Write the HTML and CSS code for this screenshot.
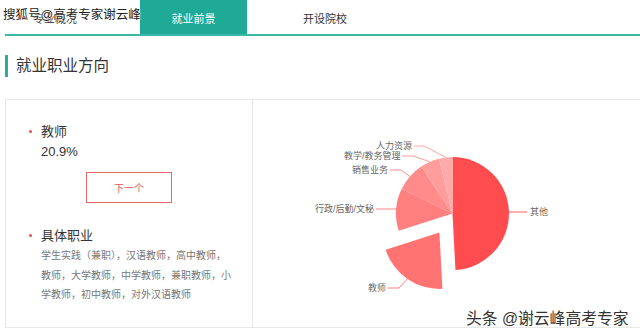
FILE: index.html
```html
<!DOCTYPE html>
<html lang="zh-CN">
<head>
    <meta charset="UTF-8">
    <meta name="viewport" content="width=device-width, initial-scale=1.0">
    <title>就业前景</title>
    <link rel="stylesheet" href="styles.css">
</head>
<body>

<div class="page">
    <div class="tabs">
        <div class="tab tab-first">专业概况</div>
        <div class="tab tab-active">就业前景</div>
        <div class="tab tab-last">开设院校</div>
    </div>

    <h2 class="section-title">就业职业方向</h2>

    <div class="card">
        <div class="card-info">
            <div class="info-item">
                <span class="dot"></span>
                <div>
                    <p class="info-name">教师</p>
                    <p class="info-name">20.9%</p>
                </div>
            </div>
            <button class="next-btn">下一个</button>
            <div class="info-item info-jobs">
                <span class="dot"></span>
                <div>
                    <p class="info-name">具体职业</p>
                    <p class="info-desc">学生实践（兼职），汉语教师，高中教师，教师，大学教师，中学教师，兼职教师，小学教师，初中教师，对外汉语教师</p>
                </div>
            </div>
        </div>

        <div class="card-chart">
            <svg class="pie" width="386" height="227" viewBox="254 100 386 227">
                <!-- slices, clockwise from 12 o'clock -->
                <path fill="#ff4d4f" d="M453.5 213.5 L453.5 157 A56.5 56.5 0 0 1 456.46 269.92 Z"/>
                <path fill="#ff7373" d="M440.44 232.43 L443.4 288.85 A56.5 56.5 0 0 1 386.65 249.7 Z"/>
                <path fill="#ff7f7f" d="M453.5 213.5 L399.71 230.77 A56.5 56.5 0 0 1 402.59 189 Z"/>
                <path fill="#ff8b8b" d="M453.5 213.5 L402.59 189 A56.5 56.5 0 0 1 422.23 166.44 Z"/>
                <path fill="#ff9c9c" d="M453.5 213.5 L422.23 166.44 A56.5 56.5 0 0 1 440.02 158.63 Z"/>
                <path fill="#ffabab" d="M453.5 213.5 L440.02 158.63 A56.5 56.5 0 0 1 453.5 157 Z"/>

                <g class="pie-lines" fill="none" stroke-width="1">
                    <polyline stroke="#ff5a5c" points="510,212 528,212"/>
                    <polyline stroke="#ff7f7f" points="408.3,278.9 400,288 389,288"/>
                    <polyline stroke="#ff8585" points="397,209 377,209"/>
                    <polyline stroke="#ff8f8f" points="410.9,176.4 402,170 391,170"/>
                    <polyline stroke="#ff9a9a" points="430.8,161.7 414,156 403,156"/>
                    <polyline stroke="#ffa5a5" points="446.7,157.4 425,146 415,146"/>
                </g>

                <g class="pie-labels">
                    <text x="531" y="212" text-anchor="start">其他</text>
                    <text x="387" y="288" text-anchor="end">教师</text>
                    <text x="375" y="209" text-anchor="end">行政/后勤/文秘</text>
                    <text x="389" y="170" text-anchor="end">销售业务</text>
                    <text x="401.5" y="156" text-anchor="end">教学/教务管理</text>
                    <text x="413" y="146" text-anchor="end">人力资源</text>
                </g>
            </svg>
        </div>
    </div>

    <div class="mark mark-top">搜狐号@高考专家谢云峰</div>
    <div class="mark mark-bottom">头条 @谢云峰高考专家</div>
</div>

</body>
</html>
```

FILE: styles.css
```css
body {
    margin: 0;
    font-family: "Liberation Sans", "Noto Sans CJK SC", sans-serif;
    color: #333;
    background: #fff;
}
.page {
    position: relative;
    width: 640px;
    height: 336px;
    overflow: hidden;
}
.tabs {
    display: flex;
    margin-left: 5px;
    height: 34px;
    border-bottom: 2px solid #3bb8a1;
}
.tab {
    box-sizing: border-box;
    height: 34px;
    padding-top: 4px;
    line-height: 30px;
    font-size: 11px;
    text-align: center;
    color: #333;
}
.tab-first {
    width: 135px;
    padding-right: 35px;
}
.tab-active {
    width: 107px;
    background-color: #1fa997;
    color: #fff;
}
.tab-last {
    width: 156px;
}
.section-title {
    margin: 19px 0 0 5px;
    padding-left: 8px;
    border-left: 3px solid #2aae99;
    font-size: 15.5px;
    font-weight: normal;
    line-height: 22px;
    color: #333;
}
.card {
    display: flex;
    height: 227px;
    margin: 22px 0 0 5px;
    border: 1px solid #e8e8e8;
    border-right: none;
}
.card-info {
    box-sizing: border-box;
    width: 247px;
    padding: 22px 0 0 23px;
    border-right: 1px solid #e8e8e8;
}
.info-item {
    display: flex;
    align-items: flex-start;
}
.dot {
    flex: none;
    width: 3px;
    height: 3px;
    margin: 8px 9px 0 0;
    border-radius: 50%;
    background-color: #e05050;
}
.info-name {
    margin: 0;
    font-size: 13px;
    line-height: 20px;
    color: #333;
}
.info-desc {
    width: 194px;
    margin: 0;
    font-size: 10px;
    line-height: 19.5px;
    color: #777;
}
.next-btn {
    display: block;
    width: 86px;
    height: 31px;
    margin: 10px 0 0 57px;
    padding: 0;
    border: 1px solid #e46a6a;
    background: #fff;
    font-family: inherit;
    font-size: 10px;
    color: #e05a5a;
}
.info-jobs {
    margin-top: 23px;
}
.card-chart {
    flex: 1;
}
.pie {
    display: block;
}
.pie-labels text {
    font-size: 9px;
    fill: #666;
    dominant-baseline: central;
}
.mark {
    position: absolute;
    white-space: nowrap;
    color: #222;
    text-shadow: 0 0 2px #fff, 0 0 2px #fff, 0 0 1px #fff;
}
.mark-top {
    left: 3px;
    top: 7px;
    font-size: 12.5px;
    line-height: 16px;
}
.mark-bottom {
    left: 466px;
    top: 309px;
    font-size: 15.8px;
    line-height: 20px;
    color: #333;
}
```
